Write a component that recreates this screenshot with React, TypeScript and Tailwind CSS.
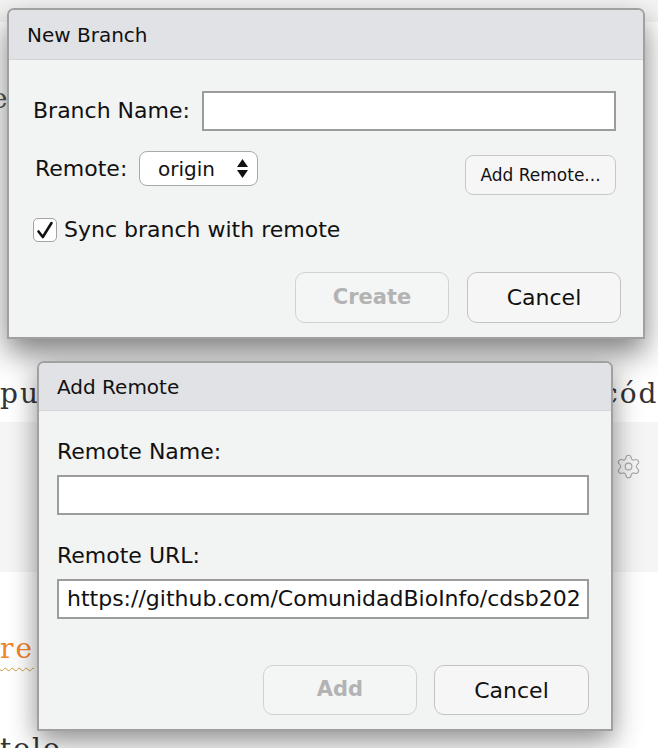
import { Settings } from "lucide-react";

function SelectArrows() {
  return (
    <svg width="11" height="19" viewBox="0 0 11 19" className="ml-auto">
      <path d="M5.5 0 L11 8 L0 8 Z" fill="#111" />
      <path d="M0 11 L11 11 L5.5 19 Z" fill="#111" />
    </svg>
  );
}

function CheckBox() {
  return (
    <div className="w-[24px] h-[24px] rounded-[5px] border border-[#a3a3a3] bg-white flex items-center justify-center shrink-0">
      <svg width="22" height="22" viewBox="0 0 22 22">
        <path d="M4.5 12.5 L8.8 18 L17.5 4" fill="none" stroke="#111" strokeWidth="2.6" strokeLinecap="round" strokeLinejoin="round" />
      </svg>
    </div>
  );
}

export default function App() {
  return (
    <div className="relative w-[658px] h-[748px] overflow-hidden bg-white">
      {/* background page */}
      <div className="flex flex-col font-['DejaVu_Serif',serif] text-[28px] tracking-[2px] text-[#333]">
        <div className="h-[22px] bg-[#f4f4f4]" />
        <div className="h-[340px] pt-[60px]">
          <div className="-ml-[9px] leading-[34px] text-[#555]">e</div>
        </div>
        <div className="h-[60px] pt-[15px] leading-[34px] whitespace-nowrap">
          <span>pu</span>
          <span className="ml-[562px]">cód</span>
        </div>
        <div className="h-[150px] bg-[#f5f5f5] flex justify-end pt-[31px] pr-[16px]">
          <Settings size={27} strokeWidth={1} color="#a8a8a8" />
        </div>
        <div className="pt-[60px] flex flex-col">
          <div className="leading-[34px] text-[#f0862a] underline decoration-wavy decoration-[#cf9a3a] decoration-1 underline-offset-[9px] self-start pr-[2px]">
            re
          </div>
          <div className="mt-[66px] leading-[34px]">tolo</div>
        </div>
      </div>

      {/* New Branch dialog */}
      <div className="absolute left-[7px] top-[8px] w-[638px] h-[331px] rounded-t-[7px] border-2 border-[#a0a0a0] bg-[#f2f3f3] shadow-[0_14px_30px_rgba(0,0,0,0.5)] flex flex-col font-['DejaVu_Sans',sans-serif] text-[#111]">
        <div className="h-[50px] shrink-0 flex items-center pl-[18px] bg-[#e1e2e5] border-b border-[#d3d4d7] rounded-t-[5px] text-[20px] leading-[24px]">
          New Branch
        </div>
        <div className="flex flex-col pl-[24px] pt-[31px]">
          <div className="flex items-center h-[40px]">
            <span className="w-[169px] text-[22px] leading-[26px]">Branch Name:</span>
            <div className="w-[414px] h-[40px] bg-white border-2 border-[#9c9c9c]" />
          </div>
          <div className="flex items-start mt-[20px]">
            <span className="w-[104px] ml-[2px] h-[35px] flex items-center text-[22px] leading-[26px]">Remote:</span>
            <div className="w-[119px] h-[35px] rounded-[8px] border-[1.5px] border-[#a9a9a9] bg-white flex items-center pl-[18px] pr-[9px] text-[20px] leading-[24px]">
              <span>origin</span>
              <SelectArrows />
            </div>
            <div className="ml-[207px] mt-[4px] w-[151px] h-[40px] rounded-[8px] border-[1.5px] border-[#c7c7c7] bg-[#f6f6f7] flex items-center justify-center text-[17px] leading-[20px]">
              Add Remote...
            </div>
          </div>
          <div className="flex items-center mt-[23px] h-[24px] gap-[7px]">
            <CheckBox />
            <span className="text-[22px] leading-[26px]">Sync branch with remote</span>
          </div>
          <div className="flex mt-[30px] ml-[262px] gap-[18px]">
            <div className="w-[154px] h-[51px] rounded-[10px] border-[1.5px] border-[#d2d2d2] bg-[#f4f5f5] flex items-center justify-center text-[21px] font-bold text-[#b3b3b3]">
              Create
            </div>
            <div className="w-[154px] h-[51px] rounded-[10px] border-[1.5px] border-[#c3c3c3] bg-[#f6f6f7] flex items-center justify-center text-[22px]">
              Cancel
            </div>
          </div>
        </div>
      </div>

      {/* Add Remote dialog */}
      <div className="absolute left-[37px] top-[361px] w-[576px] h-[370px] rounded-t-[7px] border-2 border-[#a0a0a0] bg-[#f2f3f3] shadow-[0_10px_28px_rgba(0,0,0,0.45)] flex flex-col font-['DejaVu_Sans',sans-serif] text-[#111]">
        <div className="h-[48px] shrink-0 flex items-center pl-[18px] bg-[#e1e2e5] border-b border-[#d3d4d7] rounded-t-[5px] text-[20px] leading-[24px]">
          Add Remote
        </div>
        <div className="flex flex-col pl-[18px]">
          <span className="mt-[28px] text-[22px] leading-[26px]">Remote Name:</span>
          <div className="mt-[10px] w-[532px] h-[40px] bg-white border-2 border-[#9c9c9c]" />
          <span className="mt-[28px] text-[22px] leading-[26px]">Remote URL:</span>
          <div className="mt-[10px] w-[532px] h-[40px] bg-white border-2 border-[#9c9c9c] flex items-center pl-[8px] text-[22px] leading-[26px] overflow-hidden whitespace-nowrap">
            https://github.com/ComunidadBioInfo/cdsb202
          </div>
          <div className="flex mt-[46px] ml-[206px] gap-[17px]">
            <div className="w-[154px] h-[50px] rounded-[10px] border-[1.5px] border-[#d2d2d2] bg-[#f4f5f5] flex items-center justify-center text-[21px] font-bold text-[#b3b3b3]">
              Add
            </div>
            <div className="w-[155px] h-[50px] rounded-[10px] border-[1.5px] border-[#c3c3c3] bg-[#f6f6f7] flex items-center justify-center text-[22px]">
              Cancel
            </div>
          </div>
        </div>
      </div>
    </div>
  );
}
